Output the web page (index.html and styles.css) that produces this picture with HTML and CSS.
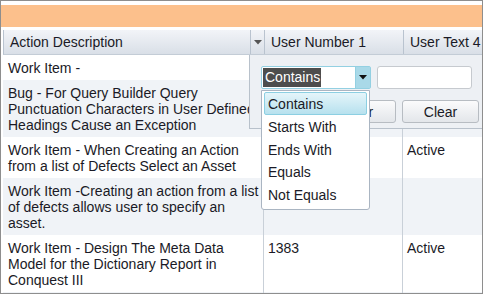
FILE: index.html
```html
<!DOCTYPE html>
<html lang="en">
<head>
    <meta charset="UTF-8">
    <title>Actions Grid</title>
    <link rel="stylesheet" href="styles.css">
</head>
<body>
    <div class="grid">
        <div class="toolbar"></div>

        <div class="head">
            <div class="hcell">Action Description</div>
            <div class="hmenu">
                <svg width="8" height="5" viewBox="0 0 8 5"><path d="M0 0H8L4 4.5Z" fill="#555"/></svg>
            </div>
            <div class="hcell">User Number 1</div>
            <div class="hcell last">User Text 4</div>
        </div>

        <div class="body">
            <div class="row">
                <div class="cell first">Work Item -</div>
                <div class="cell"></div>
                <div class="cell"></div>
            </div>
            <div class="row alt">
                <div class="cell first">Bug - For Query Builder Query Punctuation Characters in User Defined Headings Cause an Exception</div>
                <div class="cell"></div>
                <div class="cell"></div>
            </div>
            <div class="row">
                <div class="cell first">Work Item - When Creating an Action from a list of Defects Select an Asset</div>
                <div class="cell"></div>
                <div class="cell">Active</div>
            </div>
            <div class="row alt">
                <div class="cell first">Work Item -Creating an action from a list of defects allows user to specify an asset.</div>
                <div class="cell"></div>
                <div class="cell"></div>
            </div>
            <div class="row">
                <div class="cell first">Work Item - Design The Meta Data Model for the Dictionary Report in Conquest III</div>
                <div class="cell">1383</div>
                <div class="cell">Active</div>
            </div>
            <div class="row alt">
                <div class="cell first"></div>
                <div class="cell"></div>
                <div class="cell"></div>
            </div>
        </div>

        <!-- column filter menu -->
        <div class="filter">
            <div class="filter-line">
                <div class="select">
                    <span class="select-text"><span class="select-hl">Contains</span></span>
                    <span class="select-arrow">
                        <svg width="8" height="5" viewBox="0 0 8 5"><path d="M0 0H8L4 4.5Z" fill="#111"/></svg>
                    </span>
                </div>
                <div class="input"></div>
            </div>
            <div class="filter-line buttons">
                <button class="btn">Filter</button>
                <button class="btn">Clear</button>
            </div>
        </div>

        <ul class="options">
            <li class="option selected">Contains</li>
            <li class="option">Starts With</li>
            <li class="option">Ends With</li>
            <li class="option">Equals</li>
            <li class="option">Not Equals</li>
        </ul>
    </div>
</body>
</html>
```

FILE: styles.css
```css
* {
    box-sizing: border-box;
}
body {
    margin: 0;
    font-family: "Liberation Sans", Arial, sans-serif;
    font-size: 14px;
    color: #1a1a26;
    background: #fff;
}
.grid {
    position: relative;
    width: 483px;
    height: 294px;
    border: 1px solid #8e8e8e;
    overflow: hidden;
    background: #fff;
}
.toolbar {
    height: 22px;
    margin-top: 4px;
    margin-bottom: 3px;
    background: #fcc08c;
}
.head {
    display: grid;
    grid-template-columns: 247px 14px 139px 1fr;
    margin-left: 2px;
    border-left: 1px solid #b9c3cf;
    border-bottom: 1px solid #c3ccd6;
    background: linear-gradient(#f2f4f8, #d9dfe7);
}
.hcell {
    padding: 4px 6px 4px;
    white-space: nowrap;
    overflow: hidden;
    border-right: 1px solid #b9c3cf;
}
.hcell.last {
    border-right: none;
}
.hmenu {
    display: flex;
    align-items: center;
    justify-content: center;
    border-right: 1px solid #b9c3cf;
}
.body {
    margin-left: 2px;
}
.row {
    display: grid;
    grid-template-columns: 261px 139px 1fr;
}
.row.alt {
    background: #f0f3f7;
}
.cell {
    padding: 5px 4px 4px;
    min-height: 25px;
    border-right: 1px solid #c9d0d8;
    overflow: hidden;
}
.cell.first {
    padding-left: 5px;
}
.cell:last-child {
    border-right: none;
}
.filter {
    position: absolute;
    left: 248px;
    top: 54px;
    right: 0;
    height: 74px;
    padding: 11px 0 0 11px;
    background: #edf0f4;
    border-left: 1px solid #b8c1cb;
    border-bottom: 1px solid #b8c1cb;
}
.filter-line {
    display: flex;
    gap: 6px;
}
.filter-line.buttons {
    margin-top: 11px;
    padding-left: 58px;
}
.select {
    display: flex;
    width: 110px;
    height: 23px;
    border: 1px solid #93d0e2;
    border-radius: 2px;
    background: #fff;
}
.select-text {
    flex: 1;
    padding: 1px;
}
.select-hl {
    display: inline-block;
    height: 19px;
    line-height: 19px;
    padding: 0 1px 0 2px;
    background: #4d4d4d;
    color: #fff;
}
.select-arrow {
    width: 15px;
    display: flex;
    align-items: center;
    justify-content: center;
    background: #a9d9e8;
    border-left: 1px solid #93d0e2;
}
.input {
    width: 95px;
    height: 23px;
    background: #fff;
    border: 1px solid #c6cacf;
    border-radius: 3px;
}
.btn {
    width: 77px;
    height: 23px;
    padding: 0;
    font-family: inherit;
    font-size: 14px;
    color: #1a1a26;
    background: linear-gradient(#fbfbfc, #e3e6ea);
    border: 1px solid #b7bcc2;
    border-radius: 3px;
}
.options {
    position: absolute;
    left: 260px;
    top: 89px;
    width: 109px;
    height: 120px;
    margin: 0;
    padding: 1px 2px 2px;
    list-style: none;
    background: #fff;
    border: 1px solid #aab5c2;
    border-radius: 0 0 3px 3px;
}
.option {
    height: 22.8px;
    padding: 3px 3px 0;
    border: 1px solid transparent;
    white-space: nowrap;
}
.option.selected {
    background: linear-gradient(#e5f5fa, #b7e1ee);
    border-color: #8ccfe2;
    border-radius: 2px;
}
```
